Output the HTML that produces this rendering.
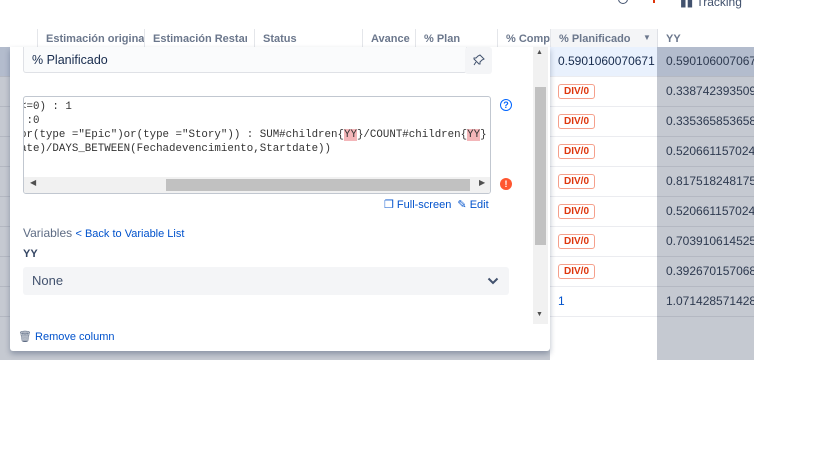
<!DOCTYPE html>
<html><head><meta charset="utf-8"><style>
*{box-sizing:border-box;margin:0;padding:0}
body{width:819px;height:460px;overflow:hidden;background:#fff;font-family:"Liberation Sans",sans-serif;position:relative;color:#172b4d}
.abs{position:absolute}
.hdr{top:29px;height:18px;font-size:11px;font-weight:bold;color:#6b778c;line-height:20px;white-space:nowrap;overflow:hidden;border-left:1px solid #e4e6ea;padding-left:8px}
.mono{font-family:"Liberation Mono","DejaVu Sans Mono",monospace;font-size:10.8px;color:#333;white-space:pre;line-height:14px}
.hl{background:#f3b6b9}
.cell{left:550px;width:107px;height:30px;border-bottom:1px solid #ebecf0;font-size:12px;line-height:29px;padding-left:8px;color:#172b4d}
.yy{left:657px;width:97px;height:30px;border-bottom:1px solid #b4b8c2;font-size:12px;line-height:29px;padding-left:9px;color:#2e3a50;overflow:hidden;white-space:nowrap}
.div0{display:inline-block;border:1px solid #f5a08c;border-radius:3px;color:#de350b;font-size:10px;font-weight:bold;line-height:13px;padding:0 5px;vertical-align:middle}
.lrow{left:0;width:10px;height:30px;border-bottom:1px solid #b4b8c2}
</style></head><body>
<div class="abs" style="left:618px;top:-6px;width:10px;height:10px;border:1.5px solid #42526e;border-radius:50%"></div>
<div class="abs" style="left:653px;top:-2px;width:2px;height:5px;background:#de350b"></div>
<div class="abs" style="left:680px;top:-5px;font-size:12px;color:#42526e">&#9646;&#9646; Tracking</div>
<div class="abs hdr" style="left:37px;width:107px">Estimación original</div>
<div class="abs hdr" style="left:144px;width:103px">Estimación Restante</div>
<div class="abs hdr" style="left:254px;width:103px">Status</div>
<div class="abs hdr" style="left:362px;width:52px">Avance</div>
<div class="abs hdr" style="left:415px;width:80px">% Plan</div>
<div class="abs hdr" style="left:497px;width:53px">% Comp</div>
<div class="abs hdr" style="left:550px;width:107px;background:#f4f5f7;color:#6b778c">% Planificado<span style="position:absolute;left:92px;top:-1px;font-size:8px">&#9660;</span></div>
<div class="abs hdr" style="left:657px;width:97px;border-left:1px solid #dfe1e6">YY</div>
<div class="abs" style="left:0;top:47px;width:550px;height:313px;background:#c5c9d1"></div>
<div class="abs lrow" style="top:47px;background:#b3bccd"></div>
<div class="abs lrow" style="top:77px"></div><div class="abs lrow" style="top:107px"></div><div class="abs lrow" style="top:137px"></div><div class="abs lrow" style="top:167px"></div><div class="abs lrow" style="top:197px"></div><div class="abs lrow" style="top:227px"></div><div class="abs lrow" style="top:257px"></div><div class="abs lrow" style="top:287px"></div>
<div class="abs cell" style="top:47px;background:#e9f1fd;overflow:hidden;white-space:nowrap">0.5901060070671</div>
<div class="abs cell" style="top:77px"><span class="div0">DIV/0</span></div>
<div class="abs cell" style="top:107px"><span class="div0">DIV/0</span></div>
<div class="abs cell" style="top:137px"><span class="div0">DIV/0</span></div>
<div class="abs cell" style="top:167px"><span class="div0">DIV/0</span></div>
<div class="abs cell" style="top:197px"><span class="div0">DIV/0</span></div>
<div class="abs cell" style="top:227px"><span class="div0">DIV/0</span></div>
<div class="abs cell" style="top:257px"><span class="div0">DIV/0</span></div>
<div class="abs cell" style="top:287px;color:#0052cc">1</div>
<div class="abs" style="left:657px;top:47px;width:97px;height:313px;background:#c5c9d1"></div>
<div class="abs yy" style="top:47px;background:#b3bccd">0.590106007067</div>
<div class="abs yy" style="top:77px">0.338742393509</div>
<div class="abs yy" style="top:107px">0.335365853658</div>
<div class="abs yy" style="top:137px">0.520661157024</div>
<div class="abs yy" style="top:167px">0.817518248175</div>
<div class="abs yy" style="top:197px">0.520661157024</div>
<div class="abs yy" style="top:227px">0.703910614525</div>
<div class="abs yy" style="top:257px">0.392670157068</div>
<div class="abs yy" style="top:287px">1.071428571428</div>
<div class="abs" style="left:10px;top:47px;width:540px;height:304px;background:#fff;box-shadow:0 3px 6px rgba(9,30,66,.3);border-radius:0 0 3px 3px;overflow:hidden">
  <div class="abs" style="left:13px;top:0;width:444px;height:26px;border:1px solid #dfe1e6;border-top:none;border-radius:0 0 3px 3px;background:#fafbfc;font-size:12.5px;line-height:26px;padding-left:8px;color:#172b4d">% Planificado</div>
  <div class="abs" style="left:455px;top:0;width:27px;height:27px;background:#f4f5f7;border-radius:3px;text-align:center;line-height:26px;font-size:12px;color:#42526e">
    <svg width="12" height="12" viewBox="0 0 12 12" style="margin-top:7px"><path d="M7 1l4 4-2 1-2 2 0 2-1 0-5-5 0-1 2 0 2-2z M3 8l-2 3" fill="none" stroke="#42526e" stroke-width="1"/></svg>
  </div>
  <div class="abs" style="left:13px;top:49px;width:468px;height:98px;border:1px solid #c1c7d0;border-radius:3px;overflow:hidden;background:#fff">
    <div class="abs mono" style="left:-4px;top:3px">&lt;=0) : 1
 :0
or(type ="Epic")or(type ="Story")) : SUM#children{<span class="hl">YY</span>}/COUNT#children{<span class="hl">YY</span>}
ate)/DAYS_BETWEEN(Fechadevencimiento,Startdate))</div>
    <div class="abs" style="left:0;top:80px;width:466px;height:16px;background:#f1f1f1">
      <span class="abs" style="left:6px;top:1px;font-size:8px;color:#505050">&#9664;</span>
      <div class="abs" style="left:142px;top:2px;width:304px;height:12px;background:#c1c1c1"></div>
      <span class="abs" style="left:455px;top:1px;font-size:8px;color:#505050">&#9654;</span>
    </div>
  </div>
  <div class="abs" style="left:490px;top:52px;width:12px;height:12px;border:1.5px solid #0065ff;border-radius:50%;font-size:9px;font-weight:bold;color:#0065ff;text-align:center;line-height:10px">?</div>
  <div class="abs" style="left:490px;top:131px;width:12px;height:12px;background:#ff5630;border-radius:50%;font-size:9px;font-weight:bold;color:#fff;text-align:center;line-height:12px">!</div>
  <div class="abs" style="left:374px;top:151px;font-size:11px;color:#0052cc">&#10064; Full-screen&nbsp;&nbsp;&#9998; Edit</div>
  <div class="abs" style="left:13px;top:179px;font-size:12px;color:#5e6c84">Variables <span style="font-size:11px;color:#0052cc">&lt; Back to Variable List</span></div>
  <div class="abs" style="left:13px;top:201px;font-size:11px;font-weight:bold;color:#344563">YY</div>
  <div class="abs" style="left:13px;top:220px;width:486px;height:28px;background:#f4f5f7;border-radius:3px;font-size:13px;line-height:28px;padding-left:9px;color:#42526e">None
    <svg class="abs" style="right:10px;top:10px" width="12" height="8" viewBox="0 0 12 8"><path d="M1.5 1.5l4.5 4.5 4.5-4.5" fill="none" stroke="#42526e" stroke-width="2"/></svg></div>
  <div class="abs" style="left:523px;top:0;width:15px;height:277px;background:#f1f1f1">
    <span class="abs" style="left:3px;top:2px;font-size:7px;color:#505050">&#9650;</span>
    <div class="abs" style="left:2px;top:40px;width:11px;height:158px;background:#c1c1c1"></div>
    <span class="abs" style="left:3px;top:264px;font-size:7px;color:#505050">&#9660;</span>
  </div>
  <div class="abs" style="left:8px;top:283px;font-size:11px;color:#0052cc"><span style="color:#5e6c84">&#128465;</span> Remove column</div>
</div>
</body></html>
